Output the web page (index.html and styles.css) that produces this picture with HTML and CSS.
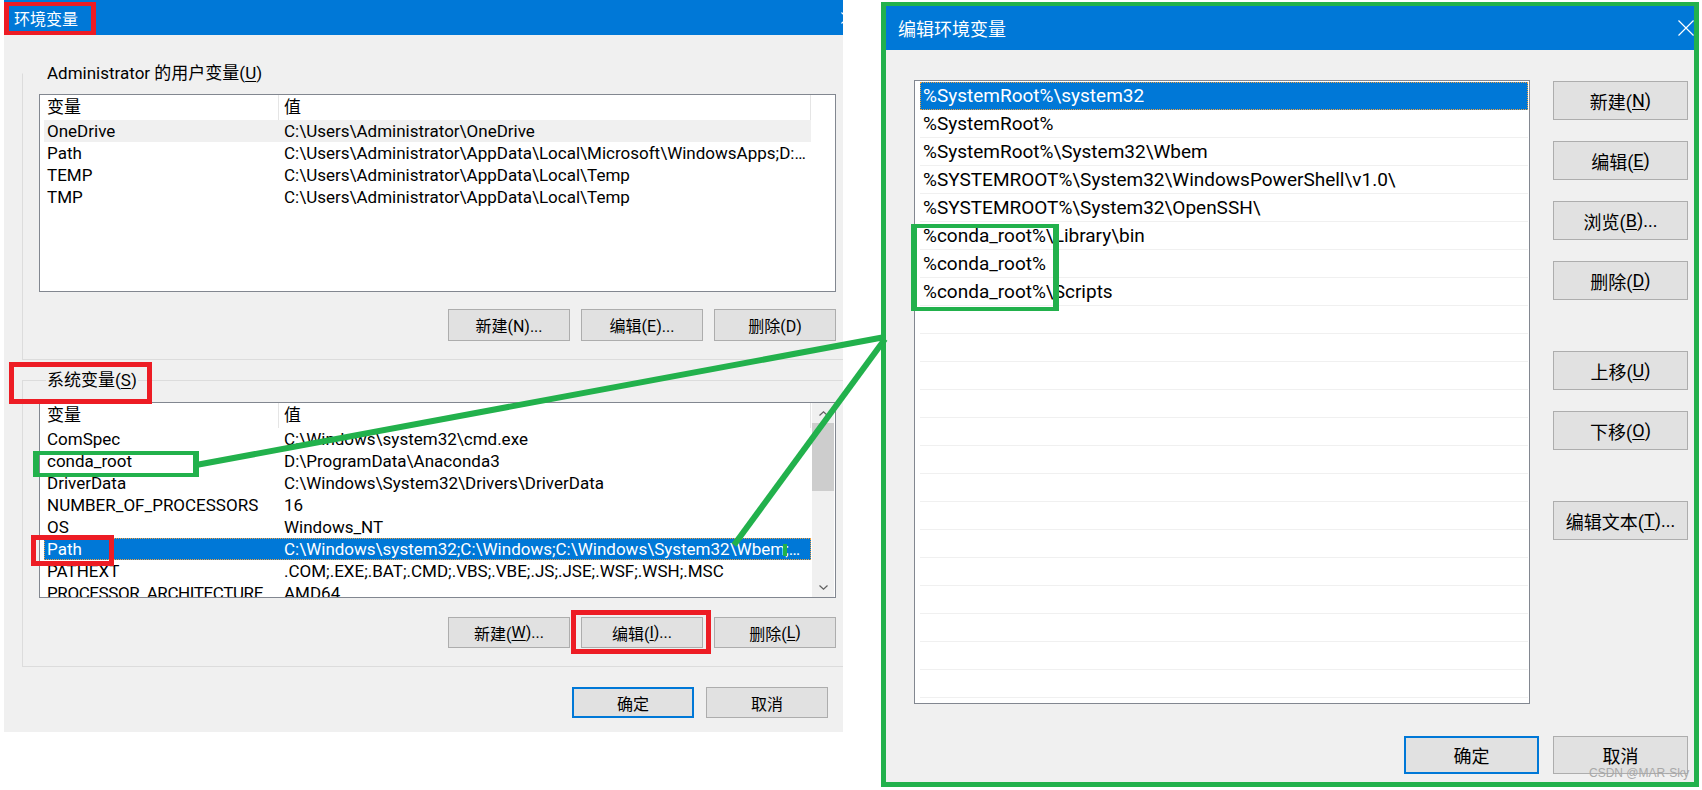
FILE: index.html
```html
<!DOCTYPE html>
<html lang="zh-CN">
<head>
<meta charset="utf-8">
<title>环境变量</title>
<link rel="stylesheet" href="styles.css">
</head>
<body>

<section class="win win-env">
  <div class="env-inner">
    <header class="titlebar">
      <span class="title">环境变量</span>
      <svg class="close" width="12" height="12" viewBox="0 0 12 12"><path d="M0.5 0.5 L11.5 11.5 M11.5 0.5 L0.5 11.5" stroke="#fff" stroke-width="1.2" fill="none"/></svg>
    </header>

    <div class="groupbox gb-user">
      <div class="legend">Administrator 的用户变量(<u>U</u>)</div>
      <div class="listview lv-user">
        <div class="lv-rows">
          <div class="lv-head"><span class="c1">变量</span><span class="c2">值</span></div>
          <div class="lv-row hot"><span class="c1">OneDrive</span><span class="c2">C:\Users\Administrator\OneDrive</span></div>
          <div class="lv-row"><span class="c1">Path</span><span class="c2">C:\Users\Administrator\AppData\Local\Microsoft\WindowsApps;D:\Tools</span></div>
          <div class="lv-row"><span class="c1">TEMP</span><span class="c2">C:\Users\Administrator\AppData\Local\Temp</span></div>
          <div class="lv-row"><span class="c1">TMP</span><span class="c2">C:\Users\Administrator\AppData\Local\Temp</span></div>
        </div>
      </div>
      <div class="btnrow">
        <div class="btn btn-sm">新建(N)...</div>
        <div class="btn btn-sm">编辑(E)...</div>
        <div class="btn btn-sm">删除(D)</div>
      </div>
    </div>

    <div class="groupbox gb-sys">
      <div class="legend">系统变量(<u>S</u>)</div>
      <div class="listview lv-sys">
        <div class="lv-rows">
          <div class="lv-head"><span class="c1">变量</span><span class="c2">值</span></div>
          <div class="lv-row"><span class="c1">ComSpec</span><span class="c2">C:\Windows\system32\cmd.exe</span></div>
          <div class="lv-row"><span class="c1">conda_root</span><span class="c2">D:\ProgramData\Anaconda3</span></div>
          <div class="lv-row"><span class="c1">DriverData</span><span class="c2">C:\Windows\System32\Drivers\DriverData</span></div>
          <div class="lv-row"><span class="c1">NUMBER_OF_PROCESSORS</span><span class="c2">16</span></div>
          <div class="lv-row"><span class="c1">OS</span><span class="c2">Windows_NT</span></div>
          <div class="lv-row sel"><span class="c1">Path</span><span class="c2">C:\Windows\system32;C:\Windows;C:\Windows\System32\Wbem;C:\Windows\System32\WindowsPowerShell\v1.0\</span></div>
          <div class="lv-row"><span class="c1">PATHEXT</span><span class="c2">.COM;.EXE;.BAT;.CMD;.VBS;.VBE;.JS;.JSE;.WSF;.WSH;.MSC</span></div>
          <div class="lv-row"><span class="c1 tight">PROCESSOR_ARCHITECTURE</span><span class="c2">AMD64</span></div>
        </div>
        <div class="scrollbar">
          <div class="sb-arrow"><svg width="9" height="5" viewBox="0 0 9 5"><path d="M0.5 4.5 L4.5 0.8 L8.5 4.5" stroke="#606060" stroke-width="1.2" fill="none"/></svg></div>
          <div class="sb-thumb"></div>
          <div class="sb-track"></div>
          <div class="sb-arrow"><svg width="9" height="5" viewBox="0 0 9 5"><path d="M0.5 0.5 L4.5 4.2 L8.5 0.5" stroke="#606060" stroke-width="1.2" fill="none"/></svg></div>
        </div>
      </div>
      <div class="btnrow">
        <div class="btn btn-sm">新建(<u>W</u>)...</div>
        <div class="btn btn-sm">编辑(<u>I</u>)...</div>
        <div class="btn btn-sm">删除(<u>L</u>)</div>
      </div>
    </div>

    <div class="footer footer-env">
      <div class="btn btn-sm btn-def">确定</div>
      <div class="btn btn-sm">取消</div>
    </div>
  </div>
</section>

<section class="win win-edit">
  <header class="titlebar">
    <span class="title">编辑环境变量</span>
    <svg class="close" width="16" height="16" viewBox="0 0 16 16"><path d="M0.5 0.5 L15.5 15.5 M15.5 0.5 L0.5 15.5" stroke="#fff" stroke-width="1.2" fill="none"/></svg>
  </header>
  <div class="edit-body">
    <div class="edit-main">
      <div class="pathlist">
        <div class="pl-row sel">%SystemRoot%\system32</div>
        <div class="pl-row">%SystemRoot%</div>
        <div class="pl-row">%SystemRoot%\System32\Wbem</div>
        <div class="pl-row">%SYSTEMROOT%\System32\WindowsPowerShell\v1.0\</div>
        <div class="pl-row">%SYSTEMROOT%\System32\OpenSSH\</div>
        <div class="pl-row">%conda_root%\Library\bin</div>
        <div class="pl-row">%conda_root%</div>
        <div class="pl-row">%conda_root%\Scripts</div>
        <div class="pl-row"></div>
        <div class="pl-row"></div>
        <div class="pl-row"></div>
        <div class="pl-row"></div>
        <div class="pl-row"></div>
        <div class="pl-row"></div>
        <div class="pl-row"></div>
        <div class="pl-row"></div>
        <div class="pl-row"></div>
        <div class="pl-row"></div>
        <div class="pl-row"></div>
        <div class="pl-row"></div>
        <div class="pl-row"></div>
        <div class="pl-row"></div>
      </div>
      <div class="sidebtns">
        <div class="btn btn-lg">新建(<u>N</u>)</div>
        <div class="btn btn-lg">编辑(<u>E</u>)</div>
        <div class="btn btn-lg">浏览(<u>B</u>)...</div>
        <div class="btn btn-lg">删除(<u>D</u>)</div>
        <div class="btn btn-lg push">上移(<u>U</u>)</div>
        <div class="btn btn-lg">下移(<u>O</u>)</div>
        <div class="btn btn-lg push">编辑文本(<u>T</u>)...</div>
      </div>
    </div>
    <div class="footer footer-edit">
      <div class="btn btn-lg btn-def">确定</div>
      <div class="btn btn-lg">取消</div>
    </div>
  </div>
</section>

<div class="annot">
  <svg class="lines" width="1702" height="790" viewBox="0 0 1702 790">
    <path d="M196 465 L885 337" stroke="#22b14c" stroke-width="6" fill="none"/>
    <path d="M734 545 L885 339" stroke="#22b14c" stroke-width="6" fill="none"/>
    <rect x="783" y="544" width="4" height="12" fill="#22b14c"/>
  </svg>
  <div class="mark red m-title"></div>
  <div class="mark red m-sys"></div>
  <div class="mark red m-path"></div>
  <div class="mark red m-edit"></div>
  <div class="mark green m-conda"></div>
  <div class="mark green m-list"></div>
  <div class="mark green m-dialog"></div>
  <div class="watermark">CSDN @MAR-Sky</div>
</div>

</body>
</html>
```

FILE: styles.css
```css
* { box-sizing: border-box; }

html, body { margin: 0; padding: 0; }

body {
  width: 1702px;
  height: 790px;
  position: relative;
  overflow: hidden;
  background: #fff;
  color: #000;
  font-family: Roboto, "Noto Sans CJK SC", sans-serif;
}

u { text-decoration-thickness: 1px; text-underline-offset: 2px; }

/* ---------- windows ---------- */
.win {
  position: absolute;
  overflow: hidden;
  background: #f0f0f0;
}

.win-env { left: 4px; top: 0; width: 839px; height: 732px; }
.env-inner { width: 870px; }

.win-edit { left: 886px; top: 6px; width: 808px; height: 776px; }

.titlebar {
  display: flex;
  align-items: center;
  justify-content: space-between;
  background: #0078d7;
  color: #fff;
  white-space: nowrap;
}

.win-env .titlebar { height: 35px; padding: 0 21px 0 10px; font-size: 16px; }
.win-edit .titlebar { height: 44px; padding: 0 0 0 12px; font-size: 18px; }

.close { display: block; flex: none; }

/* ---------- group boxes ---------- */
.groupbox {
  width: 831px;
  margin-left: 18px;
  border: 1px solid #dcdcdc;
  padding: 0 16px 18px 16px;
}
.gb-user { margin-top: 38px; border-top-color: transparent; }
.gb-sys { margin-top: 20px; }

.legend {
  display: table;
  margin: -11px 0 0 7px;
  padding: 0 1px;
  height: 20px;
  line-height: 20px;
  font-size: 17px;
  background: #f0f0f0;
  white-space: nowrap;
}

/* ---------- list views ---------- */
.listview {
  border: 1px solid #828790;
  background: #fff;
  font-size: 17px;
  overflow: hidden;
}
.lv-user { margin-top: 11px; height: 198px; }
.lv-sys { margin-top: 12px; height: 196px; display: flex; }

.lv-rows { width: 767px; margin-left: 4px; flex: none; }

.lv-head, .lv-row {
  display: grid;
  grid-template-columns: 235px 1fr;
  white-space: nowrap;
}
.lv-head { height: 25px; line-height: 25px; border-right: 1px solid #e5e5e5; }
.lv-head .c1 { border-right: 1px solid #e5e5e5; }

.lv-row { height: 22px; line-height: 22px; }
.lv-row.hot { background: #f0f0f0; }
.lv-row.sel {
  background: #0078d7;
  color: #fff;
  outline: 1px dotted #f0a040;
  outline-offset: -1px;
}

.c1, .c2 { overflow: hidden; text-overflow: ellipsis; }
.c1 { padding-left: 3px; }
.c2 { padding-left: 5px; }
.c1.tight { letter-spacing: -0.4px; text-overflow: clip; }

.scrollbar {
  flex: none;
  width: 22px;
  margin: 0 1px;
  background: #f0f0f0;
  display: flex;
  flex-direction: column;
}
.sb-arrow { height: 20px; display: flex; align-items: center; justify-content: center; }
.sb-thumb { height: 68px; background: #cdcdcd; }
.sb-track { flex: 1; }

/* ---------- buttons ---------- */
.btnrow { display: flex; justify-content: flex-end; gap: 11px; }
.gb-user .btnrow { margin-top: 17px; }
.gb-sys .btnrow { margin-top: 19px; }

.btn {
  display: flex;
  align-items: center;
  justify-content: center;
  background: #e1e1e1;
  border: 1px solid #adadad;
  white-space: nowrap;
  color: #000;
}
.btn-sm { width: 122px; height: 32px; font-size: 16px; }
.gb-sys .btn-sm { height: 31px; }
.btn-lg { width: 135px; height: 39px; font-size: 18px; }
.btn-def { border: 2px solid #0078d7; }

.footer { display: flex; justify-content: flex-end; }
.footer-env { margin-top: 20px; gap: 12px; padding-right: 46px; }
.footer-env .btn-sm { height: 31px; }

/* ---------- edit dialog ---------- */
.edit-body { padding: 30px 0 0 28px; }
.edit-main { display: flex; align-items: flex-start; }

.pathlist {
  flex: none;
  width: 616px;
  height: 624px;
  border: 1px solid #828790;
  background: #fff;
  padding: 1px 1px 0 5px;
  font-size: 19px;
  overflow: hidden;
}
.pl-row {
  height: 28px;
  line-height: 27px;
  border-bottom: 1px solid #f0f0f0;
  padding-left: 3px;
  white-space: nowrap;
}
.pl-row.sel {
  background: #0078d7;
  color: #fff;
  border-bottom-color: #0078d7;
  outline: 1px dotted #f0a040;
  outline-offset: -1px;
}

.sidebtns {
  margin-left: 23px;
  padding-top: 1px;
  display: flex;
  flex-direction: column;
  gap: 21px;
}
.sidebtns .push { margin-top: 30px; }

.footer-edit { margin-top: 32px; gap: 14px; padding-right: 6px; }
.footer-edit .btn-lg { height: 38px; }

/* ---------- annotations (overlay) ---------- */
.annot {
  position: absolute;
  left: 0;
  top: 0;
  width: 1702px;
  height: 790px;
  pointer-events: none;
}
.lines { position: absolute; left: 0; top: 0; }

.mark { position: absolute; }
.red { border: 5px solid #ed1c24; }
.green { border: 4px solid #22b14c; }

.m-title { left: 4px; top: 2px; width: 92px; height: 33px; border-width: 4px 5px; }
.m-sys { left: 9px; top: 362px; width: 143px; height: 42px; }
.m-path { left: 31px; top: 535px; width: 83px; height: 31px; }
.m-edit { left: 571px; top: 610px; width: 140px; height: 44px; }

.m-conda { left: 33px; top: 451px; width: 166px; height: 26px; border-width: 4px 6px; }
.m-list { left: 911px; top: 224px; width: 148px; height: 87px; border-width: 4px 6px; }
.m-dialog { left: 881px; top: 2px; width: 818px; height: 785px; border-width: 4px 5px 5px 5px; }

.watermark {
  position: absolute;
  left: 1589px;
  top: 766px;
  font-family: "Liberation Sans", sans-serif;
  font-size: 12px;
  color: #a8a8a8;
  white-space: nowrap;
}
```
